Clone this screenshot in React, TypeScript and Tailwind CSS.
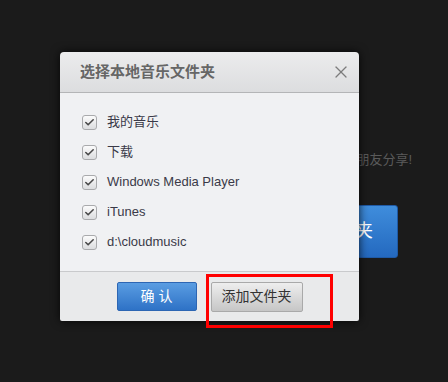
// Boîte de dialogue « choisir les dossiers de musique locale » posée sur la page sombre.
import { Check, X } from 'lucide-react'

const folders = ['我的音乐', '下载', 'Windows Media Player', 'iTunes', 'd:\\cloudmusic']

const font = "font-['Liberation_Sans','Noto_Sans_CJK_SC',sans-serif]"

export default function App() {
  return (
    <div className={`relative h-[382px] w-[448px] overflow-hidden bg-[#1b1b1b] ${font}`}>
      {/* Page en arrière-plan (partiellement masquée par le dialogue) */}
      <div className="flex flex-col items-end pt-[151px]">
        <p className="mr-[36px] text-[13px] leading-[18px] text-[#5a5a5a]">导入本地音乐，与朋友分享!</p>
        <button
          type="button"
          className="mr-[50px] mt-[36px] h-[53px] w-[140px] rounded-[3px] border border-[#1f5aa6] bg-gradient-to-b from-[#3f8ddc] to-[#2469bf] text-[18px] text-white"
        >
          添加文件夹
        </button>
      </div>

      {/* Dialogue */}
      <div className="absolute left-[60px] top-[52px] flex h-[269px] w-[299px] flex-col overflow-hidden rounded-t-[4px] rounded-b-[2px] shadow-[0_0_10px_rgba(0,0,0,0.8)]">
        <div className="flex h-[41px] items-center justify-between border-b border-[#b4b5b7] bg-gradient-to-b from-[#ececed] to-[#dcdddf] pl-[20px] pr-[8px]">
          <span className="text-[15px] font-bold text-[#666]">选择本地音乐文件夹</span>
          <X size={20} strokeWidth={1.5} className="text-[#7c7c7c]" />
        </div>

        <div className="flex flex-col bg-[#f0f1f3] py-[14px] pl-[22px]">
          {folders.map((name) => (
            <label key={name} className="flex h-[30px] items-center gap-[10px]">
              <span className="flex h-[15px] w-[15px] items-center justify-center rounded-[3px] border border-[#a9aaac] bg-gradient-to-b from-[#fbfbfb] to-[#dcdddf]">
                <Check size={11} strokeWidth={3.5} className="text-[#4a4a4a]" />
              </span>
              <span className="text-[13px] text-[#3a3a48]">{name}</span>
            </label>
          ))}
        </div>

        <div className="flex flex-1 items-center justify-center gap-[14px] border-t border-[#c9cacc] bg-[#e9eaeb]">
          <button
            type="button"
            className="h-[29px] w-[80px] rounded-[2px] border border-[#2d66b3] bg-gradient-to-b from-[#5a9de2] to-[#2e72c6] text-[14px] text-white"
          >
            确 认
          </button>
          <button
            type="button"
            className="h-[30px] w-[92px] rounded-[2px] border border-[#a9a9a9] bg-gradient-to-b from-[#eeeeee] to-[#c6c6c6] text-[14px] text-[#333]"
          >
            添加文件夹
          </button>
        </div>
      </div>

      {/* Annotation rouge */}
      <div className="absolute left-[206px] top-[274px] h-[54px] w-[127px] border-[3px] border-[#ff0000]" />
    </div>
  )
}
